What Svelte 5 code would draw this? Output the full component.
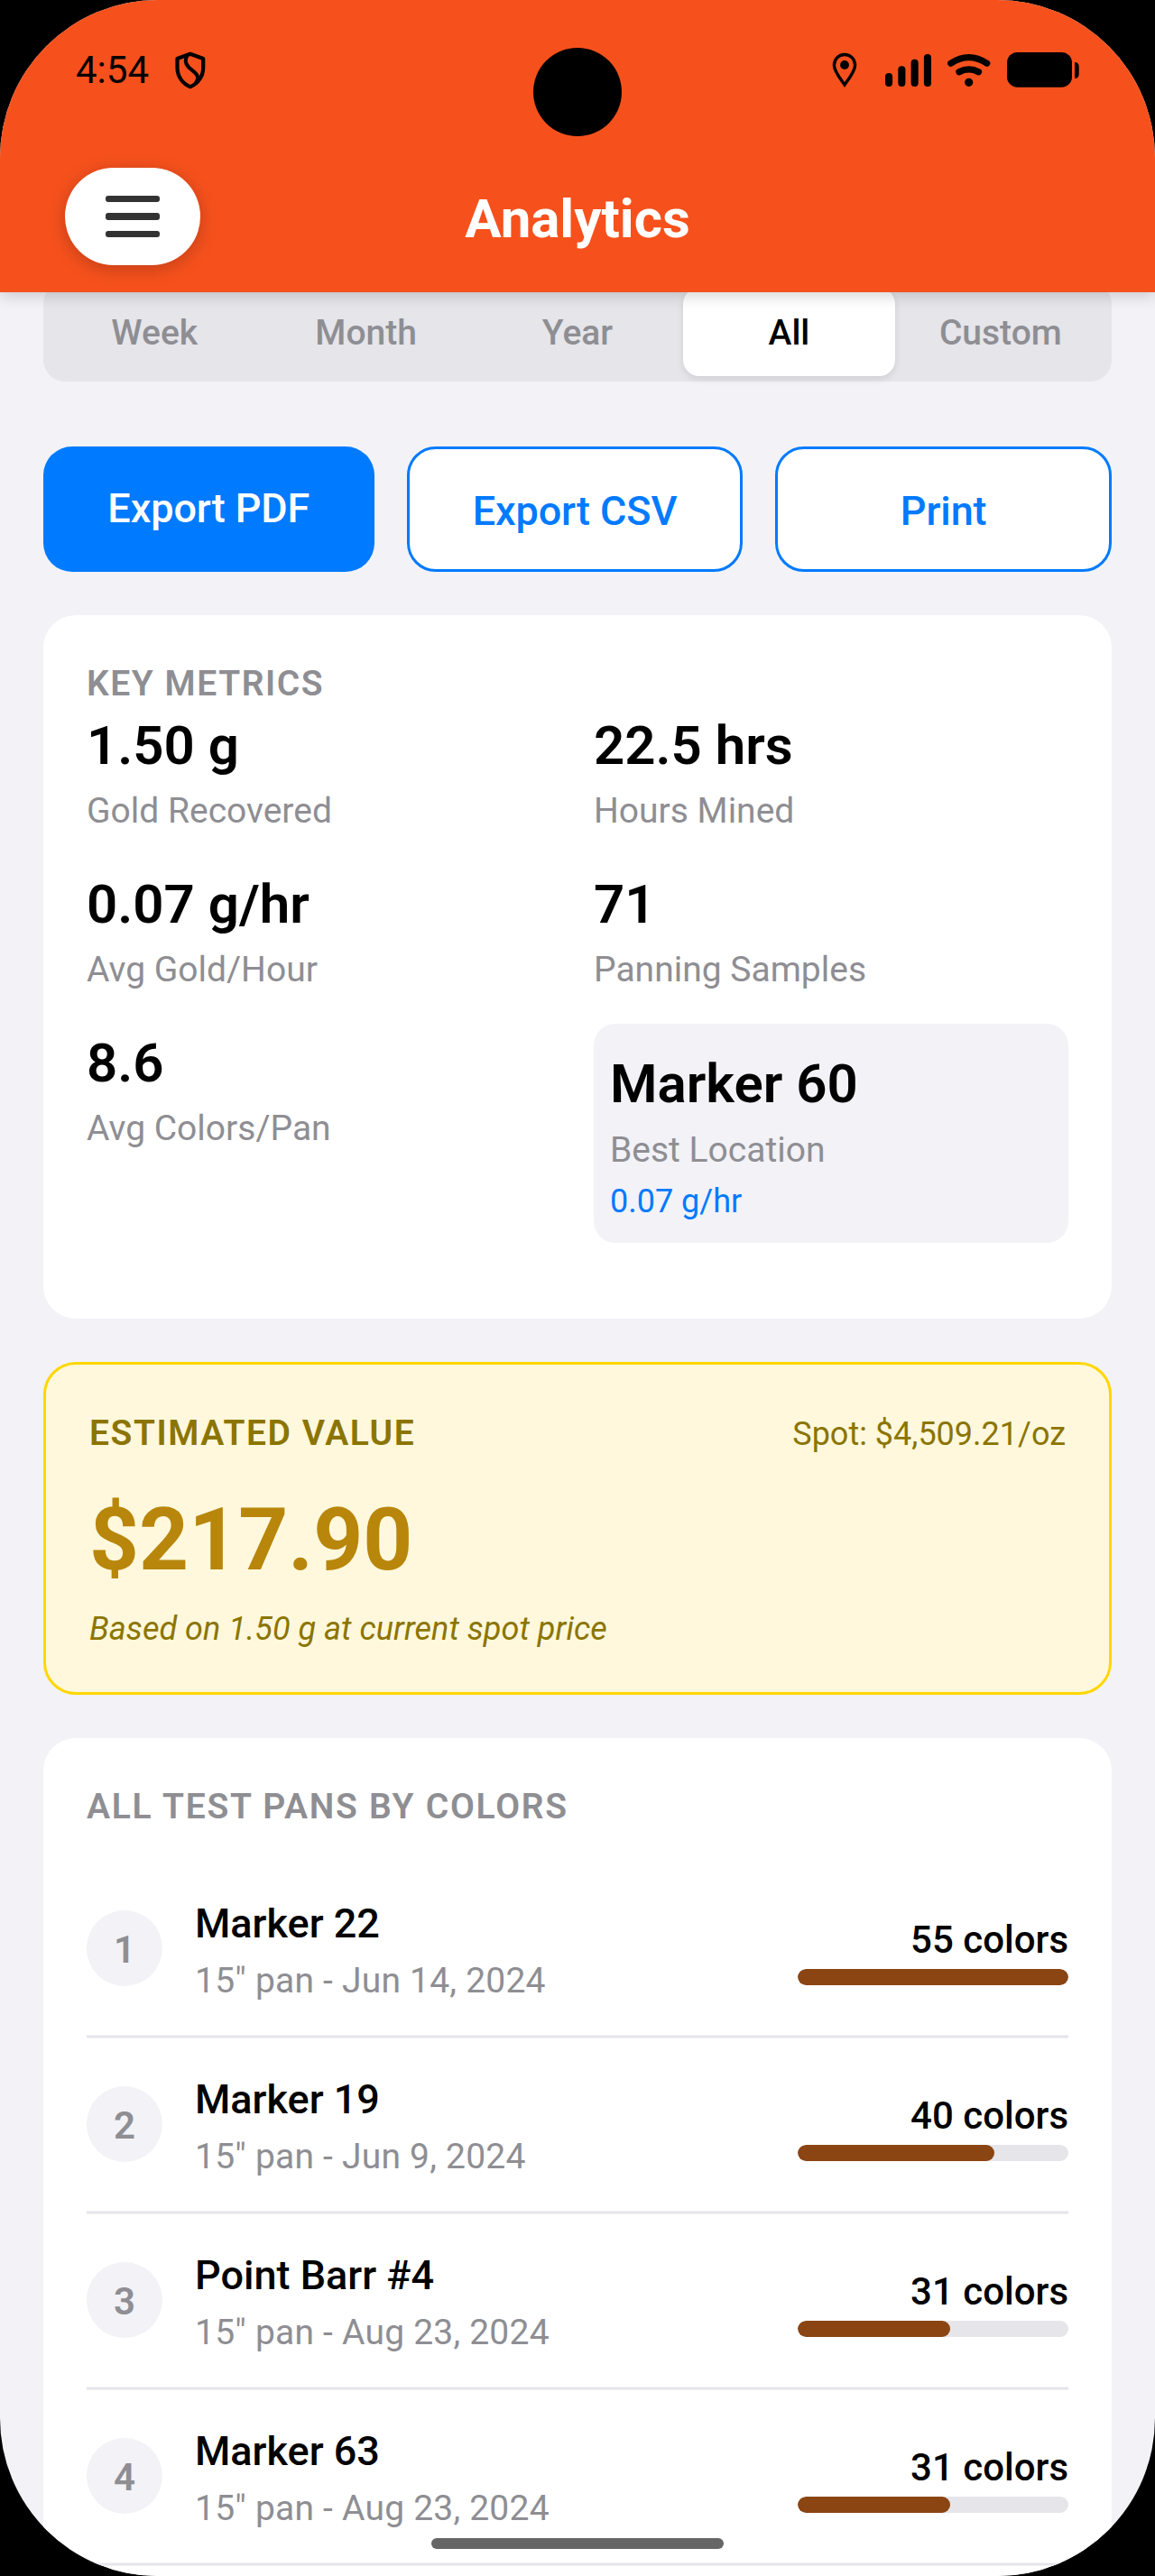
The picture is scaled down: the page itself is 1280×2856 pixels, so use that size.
<script>
	let selectedRange = 'All';
	const ranges = ['Week', 'Month', 'Year', 'All', 'Custom'];

	const metrics = [
		{ value: '1.50 g', label: 'Gold Recovered' },
		{ value: '22.5 hrs', label: 'Hours Mined' },
		{ value: '0.07 g/hr', label: 'Avg Gold/Hour' },
		{ value: '71', label: 'Panning Samples' },
		{ value: '8.6', label: 'Avg Colors/Pan' },
		{ value: 'Marker 60', label: 'Best Location', rate: '0.07 g/hr' }
	];

	const pans = [
		{ name: 'Marker 22', size: 15, date: 'Jun 14, 2024', colors: 55 },
		{ name: 'Marker 19', size: 15, date: 'Jun 9, 2024', colors: 40 },
		{ name: 'Point Barr #4', size: 15, date: 'Aug 23, 2024', colors: 31 },
		{ name: 'Marker 63', size: 15, date: 'Aug 23, 2024', colors: 31 }
	];

	const maxColors = Math.max(...pans.map((p) => p.colors));
</script>

<div class="device">
	<div class="screen">
		<header>
			<div class="status-bar">
				<div class="status-left">
					<span class="time">4:54</span>
					<svg class="shield" width="36" height="44" viewBox="13 11 36 44" fill="none" stroke="#000" stroke-width="4.2" stroke-linejoin="round" stroke-linecap="round">
						<path d="M30.800 14.800 L45.200 20 V30 C45.200 40 39 48 30.800 51.200 C22.600 48 16.500 40 16.500 30 V20 Z" />
						<path d="M27.500 16.500 C25 20.500 25 25.500 29 29.500 L36 35.500 C40.500 39.500 40 43.500 37 47" />
					</svg>
				</div>
				<div class="status-right">
					<svg class="pin" width="28" height="40" viewBox="0 0 28 40">
						<path d="M14 2.500 C7.500 2.500 2.400 7.500 2.400 14.500 C2.400 21 9 29 14 36 C19 29 25.600 21 25.600 14.500 C25.600 7.500 20.500 2.500 14 2.500 Z" fill="none" stroke="#000" stroke-width="3.400" />
						<circle cx="14" cy="14" r="4.900" />
					</svg>
					<svg class="signal" width="52" height="38" viewBox="0 0 52 38">
						<rect x="1" y="22" width="8.100" height="15" rx="4" />
						<rect x="15.300" y="14.300" width="8.100" height="22.700" rx="4" />
						<rect x="29.600" y="6.700" width="8.100" height="30.300" rx="4" />
						<rect x="43.900" y="1" width="8.100" height="36" rx="4" />
					</svg>
					<svg class="wifi" width="50" height="38" viewBox="0 0 50 38" fill="none" stroke="#000" stroke-width="7.200" stroke-linecap="round">
						<path d="M4.700 11.300 Q24.700 -2 44.700 11.300" />
						<path d="M13.900 20.700 Q24.700 15 35.500 20.700" />
						<circle cx="24.700" cy="32.300" r="4.600" fill="#000" stroke="none" />
					</svg>
					<svg class="battery" width="80" height="40" viewBox="0 0 80 40">
						<rect x="0" y="0" width="72" height="38.700" rx="11.500" />
						<path d="M75 11 Q79.700 11 79.700 16 V24 Q79.700 29 75 29 Z" />
					</svg>
				</div>
			</div>
			<div class="title-bar">
				<button class="menu" aria-label="Menu">
					<span></span>
					<span></span>
					<span></span>
				</button>
				<h1>Analytics</h1>
			</div>
		</header>

		<main>
			<div class="segments">
				{#each ranges as range}
					<button class="segment" class:active={range === selectedRange} on:click={() => (selectedRange = range)}>{range}</button>
				{/each}
			</div>

			<div class="actions">
				<button class="action primary">Export PDF</button>
				<button class="action">Export CSV</button>
				<button class="action">Print</button>
			</div>

			<section class="card metrics-card">
				<h2>KEY METRICS</h2>
				<div class="metrics">
					{#each metrics as metric}
						<div class="metric" class:best={metric.rate}>
							<div class="metric-value">{metric.value}</div>
							<div class="metric-label">{metric.label}</div>
							{#if metric.rate}
								<div class="metric-rate">{metric.rate}</div>
							{/if}
						</div>
					{/each}
				</div>
			</section>

			<section class="card value-card">
				<div class="value-head">
					<h2>ESTIMATED VALUE</h2>
					<span class="spot">Spot: $4,509.21/oz</span>
				</div>
				<div class="estimate">$217.90</div>
				<div class="note">Based on 1.50 g at current spot price</div>
			</section>

			<section class="card pans-card">
				<h2>ALL TEST PANS BY COLORS</h2>
				{#each pans as pan, i}
					<div class="pan">
						<div class="rank">{i + 1}</div>
						<div class="pan-info">
							<div class="pan-name">{pan.name}</div>
							<div class="pan-detail">{pan.size}" pan - {pan.date}</div>
						</div>
						<div class="pan-colors">
							<div class="count">{pan.colors} colors</div>
							<div class="track">
								<div class="fill" style="width: {(pan.colors / maxColors) * 100}%"></div>
							</div>
						</div>
					</div>
				{/each}
			</section>
		</main>
	</div>
	<div class="camera"></div>
	<div class="home-indicator"></div>
</div>

<style>
	:global(body) {
		margin: 0;
		background: #000;
	}

	.device {
		position: relative;
		width: 1280px;
		height: 2856px;
		background: #000;
		font-family: Roboto, sans-serif;
		color: #000;
		overflow: hidden;
	}

	.screen {
		width: 100%;
		height: 100%;
		background: #f2f2f7;
		border-radius: 175px;
		overflow: hidden;
	}

	button {
		font-family: inherit;
		border: none;
		margin: 0;
		padding: 0;
		cursor: pointer;
	}

	h1,
	h2 {
		margin: 0;
	}

	header {
		position: relative;
		z-index: 1;
		height: 324px;
		background: #f6511d;
		box-shadow: 0 4px 16px rgba(0, 0, 0, 0.17);
	}

	.status-bar {
		display: flex;
		justify-content: space-between;
		height: 156px;
		padding: 0 84px;
	}

	.status-left,
	.status-right {
		display: flex;
		align-items: center;
		height: 156px;
	}

	.time {
		font-size: 42px;
		line-height: 50px;
		margin-right: 28px;
	}

	.pin {
		margin-right: 30px;
	}

	.signal {
		margin-right: 17px;
	}

	.wifi {
		margin-right: 17px;
	}

	.title-bar {
		display: grid;
		grid-template-columns: 150px 1fr 150px;
		align-items: center;
		height: 168px;
		padding: 0 72px;
	}

	.menu {
		display: flex;
		flex-direction: column;
		align-items: center;
		justify-content: center;
		gap: 12px;
		width: 150px;
		height: 108px;
		border-radius: 54px;
		background: #fff;
		box-shadow: 0 4px 20px rgba(0, 0, 0, 0.22);
	}

	.menu span {
		width: 60px;
		height: 7.5px;
		border-radius: 3px;
		background: #333;
	}

	h1 {
		padding-top: 6px;
		color: #fff;
		font-size: 60px;
		font-weight: 700;
		line-height: 70px;
		text-align: center;
	}

	main {
		margin-top: -11px;
		padding: 0 48px;
	}

	.segments {
		display: flex;
		box-sizing: border-box;
		height: 110px;
		padding: 6px;
		border-radius: 24px;
		background: #e5e5ea;
	}

	.segment {
		flex: 1;
		padding-top: 2px;
		border-radius: 18px;
		background: none;
		color: #8e8e93;
		font-size: 39px;
		font-weight: 500;
	}

	.segment.active {
		background: #fff;
		color: #000;
		box-shadow: 0 3px 8px rgba(0, 0, 0, 0.1);
	}

	.actions {
		display: flex;
		gap: 36px;
		margin-top: 72px;
	}

	.action {
		flex: 1 1 0;
		box-sizing: content-box;
		height: 129px;
		padding-top: 4px;
		border: 3px solid #007aff;
		border-radius: 32px;
		background: #fff;
		color: #007aff;
		font-size: 45px;
		font-weight: 500;
		letter-spacing: -0.1px;
	}

	.action.primary {
		height: 137px;
		padding: 0 0 2px;
		border: none;
		background: #007aff;
		color: #fff;
	}

	.card {
		box-sizing: border-box;
		margin-top: 48px;
		padding: 48px;
		border-radius: 36px;
		background: #fff;
	}

	h2 {
		padding-top: 5px;
		color: #8e8e93;
		font-size: 39px;
		font-weight: 600;
		line-height: 47px;
		letter-spacing: 1.55px;
	}

	.metrics-card {
		height: 780px;
	}

	.metrics {
		display: grid;
		grid-template-columns: 1fr 1fr;
		column-gap: 36px;
		margin-top: 1px;
	}

	.metric {
		height: 176px;
	}

	.metric-value {
		padding-top: 7px;
		font-size: 60px;
		font-weight: 600;
		line-height: 74px;
	}

	.metric-label {
		margin-top: 7px;
		padding-top: 4px;
		color: #8e8e93;
		font-size: 39px;
		line-height: 48px;
	}

	.metric.best {
		box-sizing: border-box;
		height: 243px;
		padding: 23px 18px;
		border-radius: 24px;
		background: #f2f2f7;
	}

	.metric.best .metric-label {
		margin-top: 8px;
	}

	.metric-rate {
		margin-top: 7px;
		padding-top: 4px;
		color: #007aff;
		font-size: 36px;
		line-height: 44px;
	}

	.value-card {
		height: 369px;
		border: 3px solid #ffd700;
		background: #fff8dc;
	}

	.value-head {
		display: flex;
		align-items: center;
		justify-content: space-between;
	}

	.value-card h2,
	.spot,
	.note {
		color: #8b7500;
	}

	.spot {
		padding-top: 6px;
		font-size: 36px;
		line-height: 44px;
	}

	.estimate {
		margin-top: 25px;
		padding-top: 10px;
		color: #b8860b;
		font-size: 96px;
		font-weight: 700;
		line-height: 118px;
	}

	.note {
		margin-top: 14px;
		padding-top: 4px;
		font-size: 36px;
		font-style: italic;
		line-height: 44px;
		letter-spacing: 0.05px;
	}

	.pans-card h2 {
		margin-bottom: 37px;
		letter-spacing: 1.75px;
	}

	.pan {
		display: flex;
		align-items: center;
		height: 193px;
		border-bottom: 2px solid #e5e5ea;
		box-shadow: 0 1px 0 #f2f2f5, inset 0 -1px 0 #f2f2f5;
	}

	.rank {
		width: 84px;
		height: 84px;
		margin: 0 36px 1px 0;
		border-radius: 50%;
		background: #f2f2f7;
		color: #8e8e93;
		font-size: 42px;
		font-weight: 600;
		line-height: 87px;
		text-align: center;
	}

	.pan-info {
		flex: 1;
	}

	.pan-name {
		padding-top: 4px;
		font-size: 45px;
		font-weight: 500;
		line-height: 55px;
	}

	.pan-detail {
		margin-top: 8px;
		padding-top: 4px;
		color: #8e8e93;
		font-size: 39px;
		line-height: 48px;
		letter-spacing: 0.22px;
	}

	.pan-colors {
		width: 300px;
	}

	.count {
		padding-top: 5px;
		font-size: 42px;
		font-weight: 500;
		line-height: 52px;
		text-align: right;
	}

	.track {
		height: 18px;
		margin-top: 6px;
		border-radius: 9px;
		background: #e5e5ea;
		overflow: hidden;
	}

	.fill {
		height: 100%;
		border-radius: 9px;
		background: #8b4513;
	}

	.camera {
		position: absolute;
		z-index: 2;
		top: 53px;
		left: 591px;
		width: 98px;
		height: 98px;
		border-radius: 50%;
		background: #000;
	}

	.home-indicator {
		position: absolute;
		z-index: 2;
		bottom: 30px;
		left: 478px;
		width: 324px;
		height: 12px;
		border-radius: 6px;
		background: #666;
	}
</style>
